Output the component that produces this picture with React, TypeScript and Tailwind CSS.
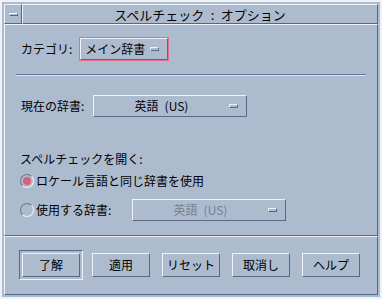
import React from 'react';

const Indicator: React.FC = () => (
  <span className="block w-[9px] h-[4px] border-t border-l border-[#eef2f8] border-r border-b border-r-[#5b6a84] border-b-[#5b6a84]" />
);

const Option: React.FC<{ label: string; w: string; disabled?: boolean; centered?: boolean }> = ({ label, w, disabled, centered }) => (
  <div className={`${w} h-[22px] flex items-center border-t border-l border-[#eef2f8] border-r border-b border-r-[#5b6a84] border-b-[#5b6a84]`}>
    <span className={`flex-1 ${centered ? 'text-center' : 'pl-[4px]'} ${disabled ? 'text-[#76808f]' : 'text-black'}`}>{label}</span>
    <span className="pr-[8px]"><Indicator /></span>
  </div>
);

const Radio: React.FC<{ on?: boolean }> = ({ on }) => (
  <span className="w-[14px] h-[14px] rounded-full flex items-center justify-center border border-t-[#6a7890] border-l-[#6a7890] border-r-[#f0f4f8] border-b-[#f0f4f8]">
    {on && <span className="w-[8px] h-[8px] rounded-full bg-[#d8607e]" />}
  </span>
);

const Btn: React.FC<{ label: string }> = ({ label }) => (
  <div className="w-[58px] h-[24px] flex items-center justify-center border-t border-l border-[#eef2f8] border-r border-b border-r-[#5b6a84] border-b-[#5b6a84]">
    {label}
  </div>
);

const App: React.FC = () => {
  return (
    <div
      className="w-[382px] h-[299px] bg-[#adbbcf] border-2 border-[#eef2f6] p-[2px] flex flex-col text-[12px] leading-none text-black"
      style={{ fontFamily: '"Noto Sans CJK JP", "Noto Sans", sans-serif' }}
    >
      {/* title bar */}
      <div className="flex h-[20px]">
        <div className="w-[18px] flex items-center justify-center border-t border-l border-[#eef2f8] border-r border-b border-r-[#56658a] border-b-[#56658a]">
          <span className="block w-[9px] h-[3px] border-t border-l border-[#f4f6fa] border-r border-b border-r-[#56658a] border-b-[#56658a]" />
        </div>
        <div className="flex-1 flex items-center justify-center text-[13px] border-t border-l border-[#eef2f8] border-r border-b border-r-[#56658a] border-b-[#56658a]">
          {'スペルチェック\u2002:\u2002オプション'}
        </div>
      </div>

      {/* main panel */}
      <div className="h-[212px] border-t border-l border-[#eef2f8] border-r border-b border-r-[#56658a] border-b-[#56658a] flex flex-col">
        <div className="flex items-center gap-[7px] pl-[16px] mt-[12px]">
          <span>カテゴリ:</span>
          <div className="border border-[#e0708e]">
            <Option label="メイン辞書" w="w-[88px]" />
          </div>
        </div>

        <div className="mx-[11px] mt-[13px] h-[2px] border-t border-[#6676a4] border-b border-b-[#dde4ee]" />

        <div className="flex items-center gap-[6px] pl-[16px] mt-[19px]">
          <span className="w-[66px]">現在の辞書:</span>
          <Option label={'英語\u2002(US)'} w="w-[154px]" centered />
        </div>

        <div className="pl-[15px] mt-[36px]">スペルチェックを開く:</div>

        <div className="flex items-center gap-[2px] pl-[15px] mt-[9px]">
          <Radio on />
          <span>ロケール言語と同じ辞書を使用</span>
        </div>

        <div className="flex items-center pl-[15px] mt-[11px]">
          <Radio />
          <span className="ml-[2px] w-[96px]">使用する辞書:</span>
          <Option label={'英語\u2002(US)'} w="w-[154px]" disabled centered />
        </div>
      </div>

      {/* buttons */}
      <div className="flex-1 border-t border-l border-[#eef2f8] border-r border-b border-r-[#56658a] border-b-[#56658a] flex items-start pl-[14px] pt-[13px] gap-[9px]">
        <div className="p-[2px] border border-t-[#5b6a84] border-l-[#5b6a84] border-r-[#eef2f8] border-b-[#eef2f8]">
          <Btn label="了解" />
        </div>
        <div className="flex gap-[12px] mt-[3px]">
          <Btn label="適用" />
          <Btn label="リセット" />
          <Btn label="取消し" />
          <Btn label="ヘルプ" />
        </div>
      </div>
    </div>
  );
};

export default App;
